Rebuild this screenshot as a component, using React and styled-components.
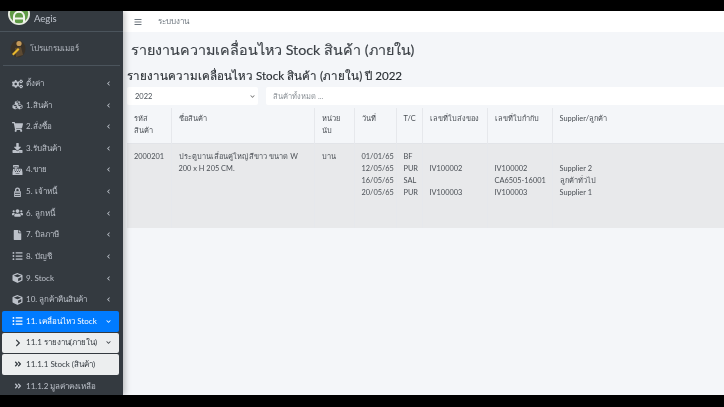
import React from 'react'
import styled, { createGlobalStyle } from 'styled-components'
import {
  FaCogs, FaCubes, FaShoppingCart, FaDownload, FaCashRegister, FaUsers, FaFile, FaCube,
  FaListUl, FaChevronLeft, FaChevronDown, FaChevronRight, FaAngleDoubleRight, FaBars,
} from 'react-icons/fa'

const Global = createGlobalStyle`
  html, body { margin:0; padding:0; height:100%; background:#000; overflow:hidden; }
  body { font-family:Lato, "Noto Sans", "Liberation Sans", sans-serif; }
`

const Screen = styled.div`
  width:724px;
  height:407px;
  background:#000;
  padding-top:11px;
  box-sizing:border-box;
  overflow:hidden;
  filter:blur(.45px);
`
const Frame = styled.div`
  display:flex;
  height:384px;
  overflow:hidden;
  background:#f4f6f9;
`
const Sidebar = styled.aside`
  width:123px;
  flex:none;
  background:#343a40;
  color:#c2c7d0;
  box-shadow:2px 0 6px rgba(0,0,0,.25);
  z-index:2;
`
const Brand = styled.div`
  height:21px;
  box-sizing:border-box;
  display:flex;
  align-items:center;
  gap:4px;
  padding:0 0 6px 8px;
  border-bottom:1px solid #4b545c;
  font-size:9.5px;
  overflow:hidden;
`
const Logo = styled.svg`
  width:22px;
  height:22px;
  margin-top:-9px;
  flex:none;
`
const UserPanel = styled.div`
  height:33px;
  margin:0 3px;
  display:flex;
  align-items:center;
  gap:4px;
  padding-left:7px;
  border-bottom:1px solid #4b545c;
  font-size:8px;
  color:#b4b9c1;
`
const Avatar = styled.svg`
  width:16px;
  height:19px;
  flex:none;
`
const Nav = styled.nav`
  display:flex;
  flex-direction:column;
  padding:7.3px 4px 0 2px;
`
const Item = styled.div`
  height:20.5px;
  flex:none;
  box-sizing:border-box;
  display:flex;
  align-items:center;
  margin-bottom:1.12px;
  padding:0 8px 0 ${p => p.$sub ? 12 : 10}px;
  font-size:8px;
  white-space:nowrap;
  border-radius:2px;
  color:${p => p.$active ? '#fff' : p.$open ? '#343a40' : '#bcc1c9'};
  background:${p => p.$active ? '#007bff' : p.$open ? '#eceeef' : 'transparent'};
  svg.main { width:${p => p.$sub ? 8 : 11}px; height:${p => p.$sub ? 8 : 10}px; margin-right:${p => p.$sub ? 4 : 3}px; flex:none; }
  svg.arrow { width:5px; height:5px; margin-left:auto; flex:none; }
`
const Main = styled.main`
  flex:1;
  min-width:0;
  display:flex;
  flex-direction:column;
`
const TopBar = styled.div`
  height:21px;
  flex:none;
  background:#fff;
  display:flex;
  align-items:center;
  gap:16px;
  padding-left:11px;
  color:#6c757d;
  font-size:8px;
  svg { width:8px; height:8px; }
`
const Content = styled.div`
  padding:0 0 0 4px;
`
const Title = styled.h1`
  margin:6px 0 0 4px;
  font-size:14.3px;
  line-height:23px;
  font-weight:400;
  color:#3b4046;
  -webkit-text-stroke:.15px #3b4046;
  white-space:nowrap;
`
const SubTitle = styled.h2`
  margin:5px 0 0;
  font-size:11.6px;
  line-height:20px;
  font-weight:400;
  color:#2b3035;
  -webkit-text-stroke:.15px #2b3035;
  white-space:nowrap;
`
const Filters = styled.div`
  display:flex;
  gap:8px;
  margin-top:1px;
  height:18px;
`
const Select = styled.div`
  width:131px;
  box-sizing:border-box;
  flex:none;
  background:#fff;
  border-radius:2px;
  display:flex;
  align-items:center;
  justify-content:space-between;
  padding:0 3px 0 8px;
  font-size:7.5px;
  color:#495057;
  svg { width:5px; height:5px; color:#777; }
`
const Search = styled.div`
  flex:1;
  background:#fff;
  border-radius:2px 0 0 2px;
  display:flex;
  align-items:center;
  padding-left:7px;
  font-size:7.5px;
  color:#8a9096;
`
const Table = styled.table`
  margin-top:3px;
  width:597px;
  table-layout:fixed;
  border-collapse:collapse;
  font-size:7.4px;
  line-height:12px;
  color:#4a4f55;
  th, td {
    padding:5px 4px 5px 7px;
    vertical-align:top;
    text-align:left;
    font-weight:400;
    border-left:1px solid #e6e8ec;
  }
  th:first-child, td:first-child { border-left:0; }
  thead tr { height:35px; border-bottom:1px solid #e2e4e8; }
  tbody tr { height:85px; background:#e8e9eb; }
  tbody td { padding-top:7px; }
`

// เจ้าหนี้ icon, no package has this shape
const LedgerIcon = () => (
  <svg className="main" viewBox="0 0 12 12">
    <path d="M3 5 V3.5 a3 3 0 0 1 6 0 V5 h-1.6 V3.6 a1.4 1.4 0 0 0 -2.8 0 V5 Z" fill="currentColor" />
    <path d="M2 5 h8 v7 H2 Z M3 7 v1 h6 V7 Z M3 9.5 v1 h6 v-1 Z" fill="currentColor" fillRule="evenodd" />
  </svg>
)

const menu = [
  [FaCogs, 'ตั้งค่า'],
  [FaCubes, '1.สินค้า'],
  [FaShoppingCart, '2.สั่งซื้อ'],
  [FaDownload, '3.รับสินค้า'],
  [FaCashRegister, '4.ขาย'],
  [LedgerIcon, '5. เจ้าหนี้'],
  [FaUsers, '6. ลูกหนี้'],
  [FaFile, '7. บิลภาษี'],
  [FaListUl, '8. บัญชี'],
  [FaCube, '9. Stock'],
  [FaCube, '10. ลูกค้าคืนสินค้า'],
]

const columns = [
  ['รหัส สินค้า', 44], ['ชื่อสินค้า', 143], ['หน่วย นับ', 40], ['วันที่', 42], ['T/C', 26],
  ['เลขที่ใบส่งของ', 65], ['เลขที่ใบกำกับ', 65], ['Supplier/ลูกค้า', 172],
]

const Lines = ({ items }) => items.map((t, i) => <div key={i}>{t || '\u00a0'}</div>)

export default function App() {
  return (
    <Screen>
      <Global />
      <Frame>
        <Sidebar>
          <Brand>
            <Logo viewBox="0 0 24 24">
              <circle cx="12" cy="12" r="12" fill="#e8ece2" />
              <circle cx="12" cy="12" r="10" fill="#5f9a45" />
              <path d="M6.5 21 V15 a5.5 5.5 0 0 1 11 0 V21 M6.5 17 h11" fill="none" stroke="#f2f5ee" strokeWidth="2.2" />
            </Logo>
            Aegis
          </Brand>
          <UserPanel>
            <Avatar viewBox="0 0 16 19">
              <ellipse cx="8" cy="10" rx="7.5" ry="8.5" fill="#3a3228" />
              <circle cx="9" cy="4.5" r="2.6" fill="#c49a5a" />
              <path d="M5 9 l6 -1 2 8 -7 2 Z" fill="#5d4a32" />
              <path d="M2 15 l6 -6 1.5 1.5 -6 6 Z" fill="#e8b82e" />
            </Avatar>
            โปรแกรมเมอร์
          </UserPanel>
          <Nav>
            {menu.map(([Icon, label]) => (
              <Item key={label}>
                <Icon className="main" />
                {label}
                <FaChevronLeft className="arrow" />
              </Item>
            ))}
            <Item $active>
              <FaListUl className="main" />
              11. เคลื่อนไหว Stock
              <FaChevronDown className="arrow" />
            </Item>
            <Item $open $sub>
              <FaChevronRight className="main" />
              11.1 รายงาน(ภายใน)
              <FaChevronDown className="arrow" />
            </Item>
            <Item $open $sub>
              <FaAngleDoubleRight className="main" />
              11.1.1 Stock (สินค้า)
            </Item>
            <Item $sub>
              <FaAngleDoubleRight className="main" />
              11.1.2 มูลค่าคงเหลือ
            </Item>
          </Nav>
        </Sidebar>
        <Main>
          <TopBar>
            <FaBars />
            ระบบงาน
          </TopBar>
          <Content>
            <Title>รายงานความเคลื่อนไหว Stock สินค้า (ภายใน)</Title>
            <SubTitle>รายงานความเคลื่อนไหว Stock สินค้า (ภายใน) ปี 2022</SubTitle>
            <Filters>
              <Select>2022<FaChevronDown /></Select>
              <Search>สินค้าทั้งหมด ...</Search>
            </Filters>
            <Table>
              <colgroup>
                {columns.map(([name, w]) => <col key={name} width={w} />)}
              </colgroup>
              <thead>
                <tr>{columns.map(([name]) => <th key={name}>{name}</th>)}</tr>
              </thead>
              <tbody>
                <tr>
                  <td>2000201</td>
                  <td>ประตูบานเลื่อนคู่ใหญ่ สีขาว ขนาด W 200 x H 205 CM.</td>
                  <td>บาน</td>
                  <td><Lines items={['01/01/65', '12/05/65', '16/05/65', '20/05/65']} /></td>
                  <td><Lines items={['BF', 'PUR', 'SAL', 'PUR']} /></td>
                  <td><Lines items={['', 'IV100002', '', 'IV100003']} /></td>
                  <td><Lines items={['', 'IV100002', 'CA6505-16001', 'IV100003']} /></td>
                  <td><Lines items={['', 'Supplier 2', 'ลูกค้าทั่วไป', 'Supplier 1']} /></td>
                </tr>
              </tbody>
            </Table>
          </Content>
        </Main>
      </Frame>
    </Screen>
  )
}
